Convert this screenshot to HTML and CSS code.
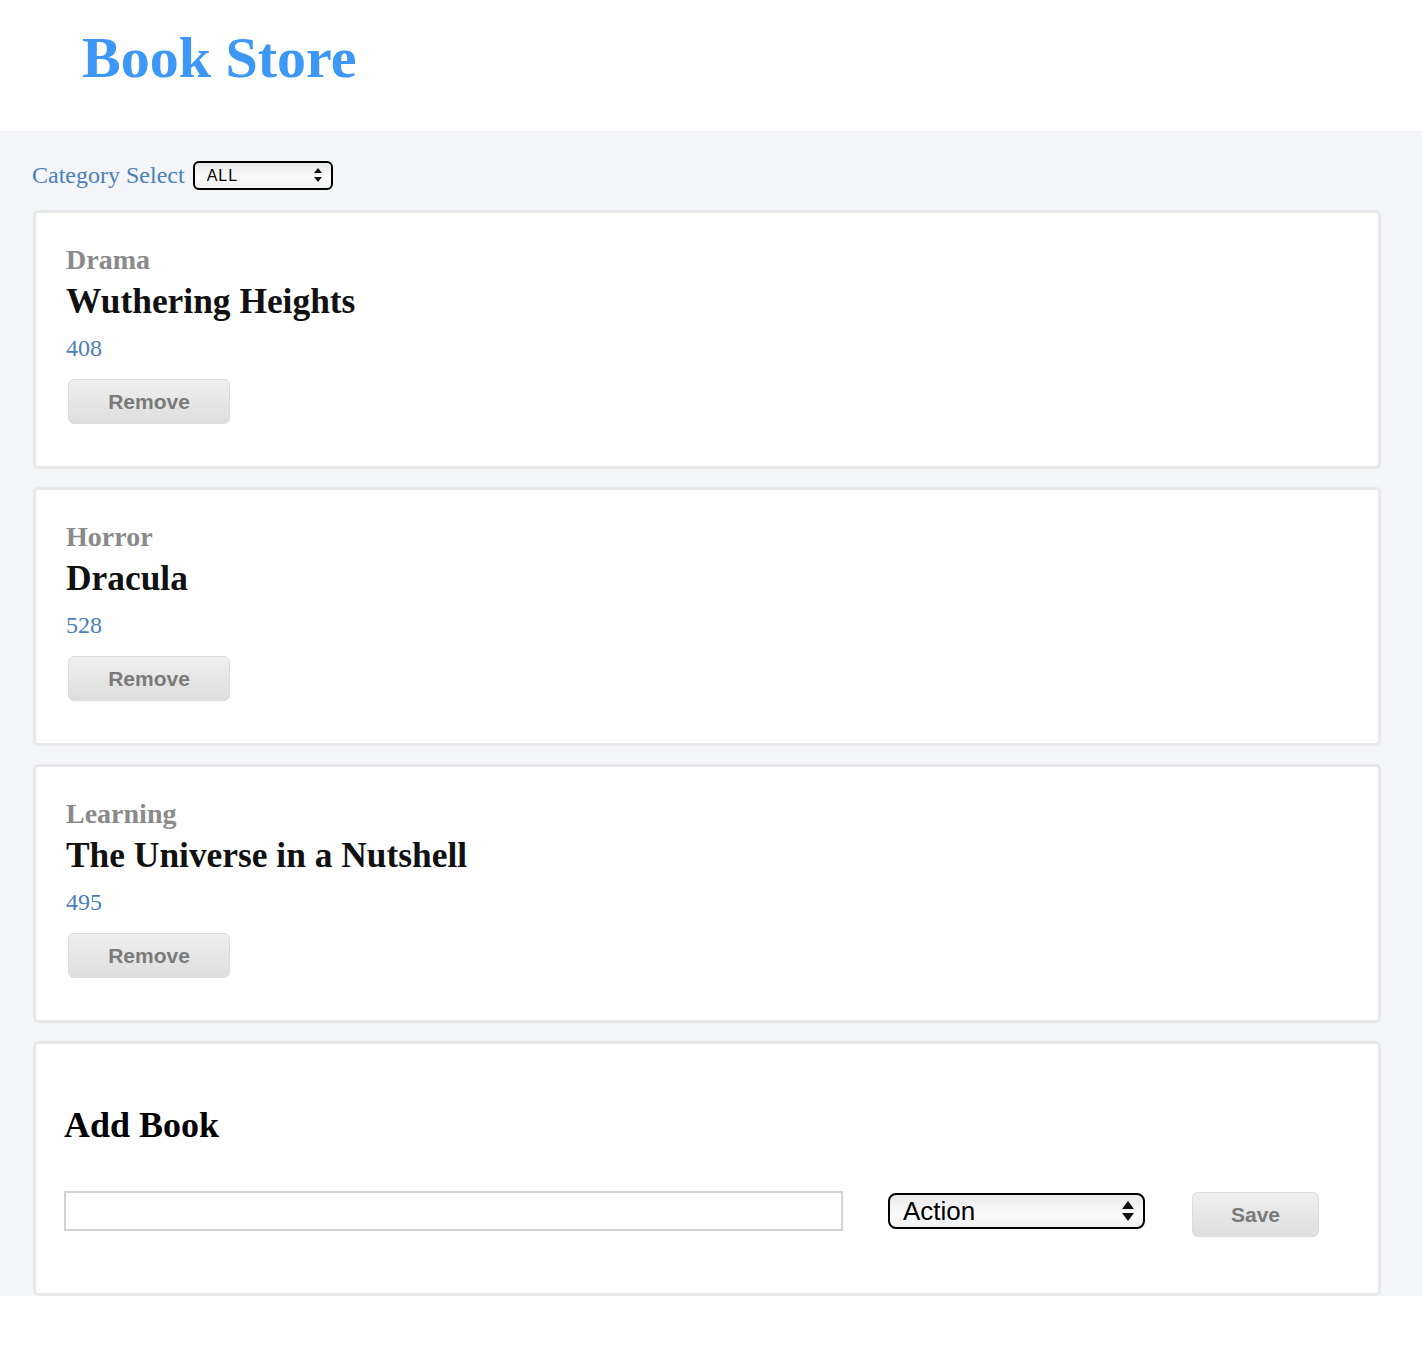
FILE: index.html
```html
<!DOCTYPE html>
<html>
<head>
<meta charset="utf-8">
<title>Book Store</title>
<link rel="stylesheet" href="styles.css">
</head>
<body>
<header class="header">
  <h1 class="brand">Book Store</h1>
</header>
<main class="main">
  <div class="filter">
    <label class="filter-label">Category Select</label>
    <span class="select-wrap select-small">
      <select class="select"><option>ALL</option></select>
      <svg class="arrows" viewBox="0 0 8 14" width="8" height="14"><path d="M4 0 L8 5 L0 5 Z M0 9 L8 9 L4 14 Z" fill="#111"/></svg>
    </span>
  </div>

  <section class="card">
    <div class="cat">Drama</div>
    <div class="title">Wuthering Heights</div>
    <div class="price">408</div>
    <button class="btn btn-remove">Remove</button>
  </section>

  <section class="card">
    <div class="cat">Horror</div>
    <div class="title">Dracula</div>
    <div class="price">528</div>
    <button class="btn btn-remove">Remove</button>
  </section>

  <section class="card">
    <div class="cat">Learning</div>
    <div class="title">The Universe in a Nutshell</div>
    <div class="price">495</div>
    <button class="btn btn-remove">Remove</button>
  </section>

  <section class="card card-add">
    <h2 class="add-title">Add Book</h2>
    <div class="form-row">
      <input class="text-input" type="text">
      <span class="select-wrap select-large">
        <select class="select"><option>Action</option></select>
        <svg class="arrows" viewBox="0 0 12 20" width="12" height="20"><path d="M6 0 L12 8 L0 8 Z M0 12 L12 12 L6 20 Z" fill="#111"/></svg>
      </span>
      <button class="btn btn-save">Save</button>
    </div>
  </section>
</main>
</body>
</html>
```

FILE: styles.css
```css
html, body {
  margin: 0;
  padding: 0;
  background: #ffffff;
}

body {
  font-family: "Liberation Serif", "Times New Roman", serif;
}

.header {
  height: 131px;
  box-sizing: border-box;
  padding: 25px 0 0 82px;
  background: #ffffff;
}

.brand {
  margin: 0;
  font-size: 58px;
  line-height: 66px;
  font-weight: bold;
  color: #3d97f6;
}

.main {
  background: #f4f5f8;
  padding: 30px 41px 0 33px;
}

.filter {
  display: flex;
  align-items: center;
  gap: 8px;
  margin-bottom: 20px;
  margin-left: -1px;
}

.filter-label {
  font-size: 24px;
  line-height: 29px;
  color: #4a80b9;
}

.select-wrap {
  position: relative;
  display: inline-block;
}

.select {
  -webkit-appearance: none;
  appearance: none;
  display: block;
  box-sizing: border-box;
  border: 2px solid #000;
  background: linear-gradient(#e9e9e9, #fbfbfb 60%, #f0f0f0);
  color: #000;
  font-family: "Liberation Sans", Arial, sans-serif;
  margin: 0;
  outline: none;
}

.select-small .select {
  width: 140px;
  height: 29px;
  border-radius: 6px;
  font-size: 16px;
  padding: 0 0 0 12px;
  letter-spacing: 1px;
}

.select-small .arrows {
  position: absolute;
  right: 11px;
  top: 7px;
}

.select-large .select {
  width: 257px;
  height: 36px;
  border-radius: 8px;
  font-size: 26px;
  padding: 0 0 0 13px;
}

.select-large .arrows {
  position: absolute;
  right: 11px;
  top: 8px;
}

.card {
  background: #ffffff;
  border: 3px solid #e8e8e9;
  border-radius: 5px;
  padding: 31px 30px 42px 30px;
  margin-bottom: 18px;
}

.cat {
  font-size: 28px;
  line-height: 32px;
  font-weight: bold;
  color: #8a8a8a;
}

.title {
  margin-top: 5px;
  font-size: 35.4px;
  line-height: 41px;
  font-weight: bold;
  color: #111111;
}

.price {
  margin-top: 12px;
  font-size: 24px;
  line-height: 28px;
  color: #4a80b9;
}

.btn {
  display: block;
  box-sizing: border-box;
  height: 45px;
  border: 1px solid #dcdcdc;
  border-radius: 6px;
  background: linear-gradient(#efefef, #dedede);
  color: #7a7a7a;
  font-family: "Liberation Sans", Arial, sans-serif;
  font-size: 21px;
  font-weight: bold;
  padding: 0;
}

.btn-remove {
  width: 162px;
  margin-top: 17px;
  margin-left: 2px;
}

.card-add {
  margin-bottom: 0;
  padding: 61px 30px 56px 28px;
}

.add-title {
  margin: 0;
  font-size: 36px;
  line-height: 41px;
  font-weight: bold;
  color: #000000;
}

.form-row {
  display: flex;
  align-items: flex-start;
  margin-top: 45px;
}

.text-input {
  box-sizing: border-box;
  width: 779px;
  height: 40px;
  border: 2px solid #d3d3d3;
  border-radius: 0;
  margin: 0;
  padding: 0 6px;
  font-size: 18px;
  outline: none;
}

.select-large {
  margin-left: 45px;
  margin-top: 2px;
}

.btn-save {
  width: 127px;
  margin-left: 47px;
  margin-top: 1px;
}
```
